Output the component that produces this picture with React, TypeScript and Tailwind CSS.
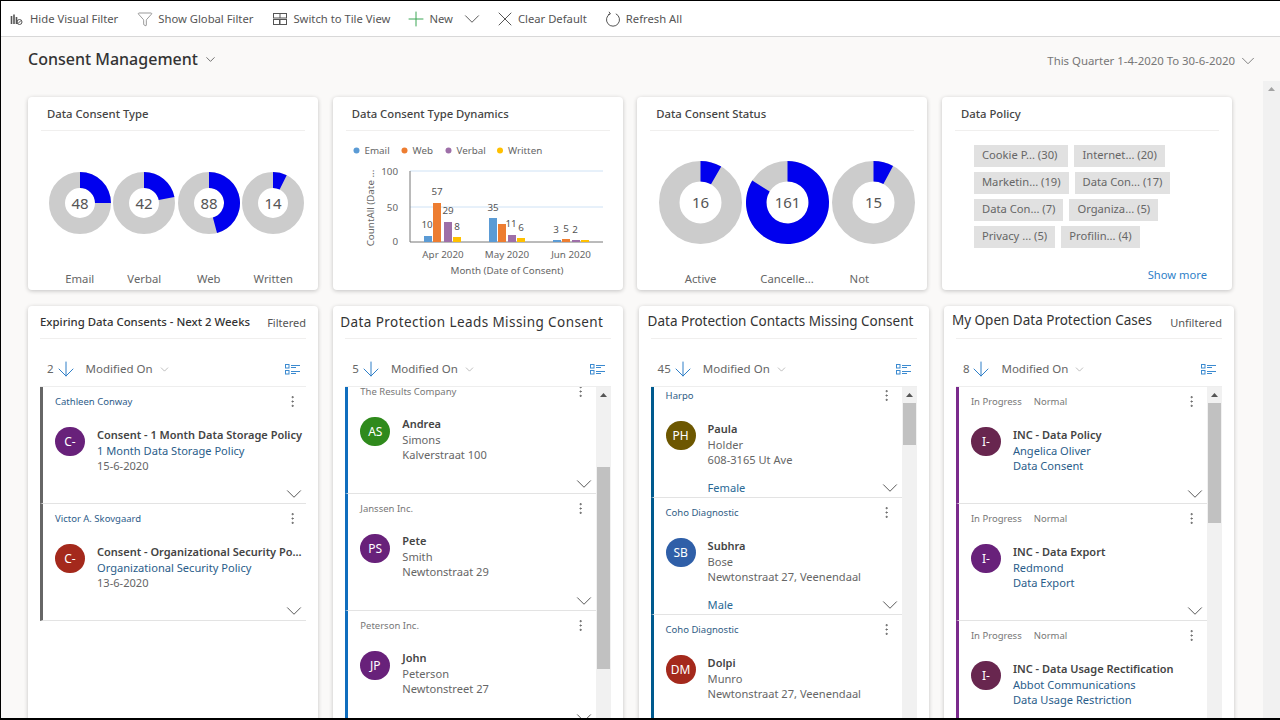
import { ArrowDown, ChevronDown, EllipsisVertical, Funnel, Plus, X } from "lucide-react";

type Row = {
  label: string[];
  initials: string;
  avatar: string;
  title: string;
  line2: string;
  line3: string;
  extra?: string;
};

function HideFilterIcon() {
  return (
    <svg width="13" height="13" viewBox="0 0 13 13" fill="none" stroke="#555" strokeWidth="1">
      <path d="M1.500 3v8M4 1.500v9.500M6.500 4v7" strokeWidth="1.600" />
      <circle cx="9.500" cy="9" r="2.500" />
      <path d="M8 10.500l3-3" />
    </svg>
  );
}

function TileIcon() {
  return (
    <svg width="14" height="12" viewBox="0 0 14 12" fill="none" stroke="#555" strokeWidth="1">
      <rect x="0.500" y="0.500" width="13" height="4.500" />
      <rect x="0.500" y="6.500" width="6" height="5" />
      <rect x="7" y="6.500" width="6.500" height="5" />
      <path d="M7 0.500v4.500" />
    </svg>
  );
}

function RefreshIcon() {
  return (
    <svg width="16" height="17" viewBox="0 0 16 17" fill="none" stroke="#555" strokeWidth="1">
      <path d="M5.200 2.800a6.500 6.500 0 1 0 5.600 0" />
      <path d="M4 0.800l1.400 2.100-2.300.8" />
    </svg>
  );
}

function ListViewIcon() {
  return (
    <svg width="15" height="11" viewBox="0 0 15 11" fill="none" stroke="#3b8ad0" strokeWidth="1">
      <rect x="0.500" y="0.500" width="3.500" height="3.500" />
      <rect x="0.500" y="6.500" width="3.500" height="3.500" />
      <path d="M6 1.500h9M6 3.500h5M6 7.500h9M6 9.500h5" />
    </svg>
  );
}

function Donut({ value, total, r, hole }: { value: number; total: number; r: number; hole: number }) {
  const a = (value / total) * Math.PI * 2;
  const big = a > Math.PI ? 1 : 0;
  const ox = r + r * Math.sin(a);
  const oy = r - r * Math.cos(a);
  const ix = r + hole * Math.sin(a);
  const iy = r - hole * Math.cos(a);
  const slice = `M${r} 0A${r} ${r} 0 ${big} 1 ${ox} ${oy}L${ix} ${iy}A${hole} ${hole} 0 ${big} 0 ${r} ${r - hole}Z`;
  return (
    <svg width={r * 2} height={r * 2} viewBox={`0 0 ${r * 2} ${r * 2}`}>
      <circle cx={r} cy={r} r={(r + hole) / 2} fill="none" stroke="#cccccc" strokeWidth={r - hole} />
      <path d={slice} fill="#0000ee" />
      <text x={r} y={r + 5.500} textAnchor="middle" fontSize="15" fill="#555">
        {value}
      </text>
    </svg>
  );
}

function TopCard({ title, children }: { title: string; children: React.ReactNode }) {
  return (
    <div className="h-[193px] bg-white rounded-sm shadow-[0_1px_4px_rgba(0,0,0,0.22)] flex flex-col">
      <div className="h-[34px] mx-[13px] pl-[6px] pt-[9px] border-b border-[#f0efee] text-[11.300px] leading-4 font-medium text-[#444] shrink-0">
        {title}
      </div>
      {children}
    </div>
  );
}

const barData = [
  { x: 424, top: 236, c: "#5b9bd5" },
  { x: 433, top: 203, c: "#ed7d31" },
  { x: 444, top: 222, c: "#9e6fa8" },
  { x: 453, top: 237, c: "#ffc000" },
  { x: 489, top: 218, c: "#5b9bd5" },
  { x: 498, top: 224, c: "#ed7d31" },
  { x: 508, top: 235, c: "#9e6fa8" },
  { x: 517, top: 238, c: "#ffc000" },
  { x: 553, top: 240, c: "#5b9bd5" },
  { x: 562, top: 239, c: "#ed7d31" },
  { x: 572, top: 240, c: "#9e6fa8" },
  { x: 581, top: 240, c: "#ffc000" },
];

const barLabels: [string, number, number][] = [
  ["10", 427, 228],
  ["57", 437, 195],
  ["29", 448, 214],
  ["8", 457, 230],
  ["35", 493, 211],
  ["11", 511, 227],
  ["6", 521, 231],
  ["3", 556, 233],
  ["5", 566, 232],
  ["2", 575, 233],
];

const legend: [string, string, number][] = [
  ["Email", "#5b9bd5", 356.500],
  ["Web", "#ed7d31", 404.500],
  ["Verbal", "#9e6fa8", 448.500],
  ["Written", "#ffc000", 500],
];

function BarChart() {
  return (
    <svg width="290" height="159" viewBox="333 131 290 159" fontSize="9.800" fill="#666">
      {legend.map(([name, color, x]) => (
        <g key={name}>
          <circle cx={x} cy="150.500" r="3" fill={color} />
          <text x={x + 8} y="154">
            {name}
          </text>
        </g>
      ))}
      <path d="M410 171H603M410 207H603" stroke="#cfe2f5" strokeWidth="1" />
      <path d="M410 171V242H603" stroke="#777" strokeWidth="1" fill="none" />
      {barData.map((b) => (
        <rect key={b.x} x={b.x} y={b.top} width="8" height={242 - b.top} fill={b.c} />
      ))}
      {barLabels.map(([t, x, y]) => (
        <text key={x} x={x} y={y} textAnchor="middle" fill="#555">
          {t}
        </text>
      ))}
      <text x="398" y="174.500" textAnchor="end">100</text>
      <text x="398" y="210.500" textAnchor="end">50</text>
      <text x="398" y="244.500" textAnchor="end">0</text>
      <text x="443" y="258" textAnchor="middle">Apr 2020</text>
      <text x="507" y="258" textAnchor="middle">May 2020</text>
      <text x="571" y="258" textAnchor="middle">Jun 2020</text>
      <text x="507" y="274" textAnchor="middle">Month (Date of Consent)</text>
      <text transform="translate(374 208) rotate(-90)" textAnchor="middle">CountAll (Date ...</text>
    </svg>
  );
}

const chips = [
  [
    { text: "Cookie P... (30)", cls: "w-[94.500px]" },
    { text: "Internet... (20)", cls: "" },
  ],
  [
    { text: "Marketin... (19)", cls: "" },
    { text: "Data Con... (17)", cls: "" },
  ],
  [
    { text: "Data Con... (7)", cls: "" },
    { text: "Organiza... (5)", cls: "" },
  ],
  [
    { text: "Privacy ... (5)", cls: "" },
    { text: "Profilin... (4)", cls: "" },
  ],
];

function ListCard({
  title,
  titleClass,
  badge,
  count,
  rows,
  barColor,
  labelColor,
  line2Color,
  line3Color,
  offset,
  thumb,
  kebabPad,
  textShift,
}: {
  title: string;
  titleClass: string;
  badge?: string;
  count: string;
  rows: Row[];
  barColor: string;
  labelColor: string;
  line2Color: string;
  line3Color: string;
  offset: string;
  thumb?: string;
  kebabPad: string;
  textShift?: string;
}) {
  return (
    <div className="h-[420px] bg-white rounded-sm shadow-[0_1px_4px_rgba(0,0,0,0.22)] flex flex-col">
      <div className="h-[33px] shrink-0 mx-3 border-b border-[#f0efee] flex items-center justify-between">
        <span className={`text-[#333] whitespace-nowrap ${titleClass}`}>{title}</span>
        {badge && <span className="text-[11px] text-[#555] mt-[2px]">{badge}</span>}
      </div>
      <div className="mx-3 h-[47px] pt-[13px] shrink-0 flex items-center pl-[7px] pr-[6px] text-[11.500px] text-[#666]">
        <span>{count}</span>
        <ArrowDown size={24} strokeWidth={1} className="text-[#2f7fc8]" />
        <span className="ml-[8px]">Modified On</span>
        <ChevronDown size={13} strokeWidth={1} className="ml-[5px] text-[#888]" />
        <span className="ml-auto">
          <ListViewIcon />
        </span>
      </div>
      <div className="mx-3 flex-1 flex min-h-0 overflow-hidden border-t border-[#eeeeee]">
        <div className="flex-1 min-w-0 overflow-hidden">
          <div className={offset}>
            {rows.map((row) => (
              <div
                key={row.title + row.line2}
                className={`h-[117px] border-l-[3px] border-b border-b-[#e3e3e3] flex flex-col ${barColor}`}
              >
                <div className={`h-[30px] shrink-0 flex items-center justify-between pl-3 ${kebabPad}`}>
                  <span className={`flex gap-3 text-[9.500px] ${labelColor}`}>
                    {row.label.map((l) => (
                      <span key={l}>{l}</span>
                    ))}
                  </span>
                  <EllipsisVertical size={15} strokeWidth={1.300} className="text-[#555] mb-[2px]" />
                </div>
                <div className="flex pl-3 pt-[10px]">
                  <div
                    className={`w-[30px] h-[29px] rounded-full shrink-0 flex items-center justify-center text-white text-[12px] ${row.avatar}`}
                  >
                    {row.initials}
                  </div>
                  <div className={`ml-3 min-w-0 text-[11.100px] leading-[15.500px] whitespace-nowrap ${textShift ?? ""}`}>
                    <div className="font-semibold text-[11px] text-[#444]">{row.title}</div>
                    <div className={line2Color}>{row.line2}</div>
                    <div className={line3Color}>{row.line3}</div>
                  </div>
                </div>
                <div className="mt-auto h-[18px] shrink-0 flex items-center justify-between pl-[54px] pr-[4px]">
                  <span className="text-[11.100px] text-[#2a6a96]">{row.extra}</span>
                  <ChevronDown size={26} strokeWidth={0.900} className="text-[#555] -mr-[5px]" />
                </div>
              </div>
            ))}
          </div>
        </div>
        {thumb && (
          <div className="w-[15px] shrink-0 bg-[#f1f1f1] flex flex-col items-center">
            <div className="h-[16px] flex items-center text-[#555]">
              <svg width="7" height="4" viewBox="0 0 7 4" fill="#555">
                <path d="M3.500 0L7 4H0z" />
              </svg>
            </div>
            <div className={`w-[13px] bg-[#c1c1c1] ${thumb}`} />
          </div>
        )}
      </div>
    </div>
  );
}

const expiring: Row[] = [
  {
    label: ["Cathleen Conway"],
    initials: "C-",
    avatar: "bg-[#68217a]",
    title: "Consent - 1 Month Data Storage Policy",
    line2: "1 Month Data Storage Policy",
    line3: "15-6-2020",
  },
  {
    label: ["Victor A. Skovgaard"],
    initials: "C-",
    avatar: "bg-[#a4291c]",
    title: "Consent - Organizational Security Po...",
    line2: "Organizational Security Policy",
    line3: "13-6-2020",
  },
];

const leads: Row[] = [
  { label: ["The Results Company"], initials: "AS", avatar: "bg-[#2f8a1c]", title: "Andrea", line2: "Simons", line3: "Kalverstraat 100" },
  { label: ["Janssen Inc."], initials: "PS", avatar: "bg-[#68217a]", title: "Pete", line2: "Smith", line3: "Newtonstraat 29" },
  { label: ["Peterson Inc."], initials: "JP", avatar: "bg-[#68217a]", title: "John", line2: "Peterson", line3: "Newtonstreet 27" },
];

const contacts: Row[] = [
  { label: ["Harpo"], initials: "PH", avatar: "bg-[#6d5700]", title: "Paula", line2: "Holder", line3: "608-3165 Ut Ave", extra: "Female" },
  { label: ["Coho Diagnostic"], initials: "SB", avatar: "bg-[#2f5fa8]", title: "Subhra", line2: "Bose", line3: "Newtonstraat 27, Veenendaal", extra: "Male" },
  { label: ["Coho Diagnostic"], initials: "DM", avatar: "bg-[#a4291c]", title: "Dolpi", line2: "Munro", line3: "Newtonstraat 27, Veenendaal" },
];

const cases: Row[] = [
  { label: ["In Progress", "Normal"], initials: "I-", avatar: "bg-[#68264f]", title: "INC - Data Policy", line2: "Angelica Oliver", line3: "Data Consent" },
  { label: ["In Progress", "Normal"], initials: "I-", avatar: "bg-[#68217a]", title: "INC - Data Export", line2: "Redmond", line3: "Data Export" },
  { label: ["In Progress", "Normal"], initials: "I-", avatar: "bg-[#68264f]", title: "INC - Data Usage Rectification", line2: "Abbot Communications", line3: "Data Usage Restriction" },
];

export default function App() {
  return (
    <div className="w-[1280px] h-[720px] overflow-hidden flex flex-col bg-[#faf9f8] border-t border-l border-b-2 border-black font-['Noto_Sans',sans-serif]">
      {/* Command bar */}
      <div className="h-9 shrink-0 pt-px bg-white border-b border-[#d8d8d8] flex items-center text-[11.250px] text-[#555]">
        <div className="ml-[9px] flex items-center gap-[7px]">
          <HideFilterIcon />
          <span>Hide Visual Filter</span>
        </div>
        <div className="ml-[19px] flex items-center gap-[5px]">
          <Funnel size={16} strokeWidth={0.900} />
          <span>Show Global Filter</span>
        </div>
        <div className="ml-[20px] flex items-center gap-[6px]">
          <TileIcon />
          <span>Switch to Tile View</span>
        </div>
        <div className="ml-[19px] flex items-center gap-[6px]">
          <Plus size={24} strokeWidth={1} className="-mx-[5px] text-[#3aa655]" />
          <span>New</span>
          <ChevronDown size={26} strokeWidth={0.900} className="ml-[0.500px] -mr-[6.500px]" />
        </div>
        <div className="ml-[20px] flex items-center gap-[7px]">
          <X size={24} strokeWidth={1} className="-mx-[6px]" />
          <span>Clear Default</span>
        </div>
        <div className="ml-[18px] flex items-center gap-[5px]">
          <RefreshIcon />
          <span>Refresh All</span>
        </div>
      </div>

      {/* Dashboard title */}
      <div className="h-[44px] shrink-0 flex items-center pl-[27px] pr-[26px]">
        <span className="text-[16px] font-medium text-[#333]">Consent Management</span>
        <ChevronDown size={15} strokeWidth={1.200} className="ml-[5px] text-[#444]" />
        <span className="ml-auto text-[11.400px] text-[#777] mt-[4px]">This Quarter 1-4-2020 To 30-6-2020</span>
        <ChevronDown size={22} strokeWidth={1} className="ml-[2px] -mr-[5px] text-[#777] mt-[3px]" />
      </div>

      <div className="flex-1 min-h-0 flex">
        <div className="flex-1 min-w-0 pl-[27px] pt-[16px]">
          <div className="grid grid-cols-[290px_290px_290px_290px] gap-x-[14.670px]">
            <TopCard title="Data Consent Type">
              <div className="flex-1 flex flex-col">
                <div className="flex pl-[19.500px] pt-[41px]">
                  {[48, 42, 88, 14].map((v) => (
                    <div key={v} className="w-[64.500px] flex justify-center">
                      <Donut value={v} total={192} r={31} hole={15} />
                    </div>
                  ))}
                </div>
                <div className="mt-auto pb-[3px] flex pl-[19.500px] text-[11.300px] leading-4 text-[#666]">
                  {["Email", "Verbal", "Web", "Written"].map((l) => (
                    <div key={l} className="w-[64.500px] text-center">
                      {l}
                    </div>
                  ))}
                </div>
              </div>
            </TopCard>

            <TopCard title="Data Consent Type Dynamics">
              <BarChart />
            </TopCard>

            <TopCard title="Data Consent Status">
              <div className="flex-1 flex flex-col">
                <div className="flex pl-[20px] pt-[30px]">
                  {[16, 161, 15].map((v) => (
                    <div key={v} className="w-[86.500px] flex justify-center">
                      <Donut value={v} total={192} r={41.500} hole={21} />
                    </div>
                  ))}
                </div>
                <div className="mt-auto pb-[3px] flex pl-[20px] text-[11.300px] leading-4 text-[#666]">
                  <div className="w-[86.500px] text-center">Active</div>
                  <div className="w-[86.500px] text-center">Cancelle...</div>
                  <div className="w-[58px] text-center">Not</div>
                </div>
              </div>
            </TopCard>

            <TopCard title="Data Policy">
              <div className="flex-1 flex flex-col pl-[32px] pt-[14px]">
                <div className="flex flex-col gap-[5.500px]">
                  {chips.map((row) => (
                    <div key={row[0].text} className="flex gap-[6px]">
                      {row.map((c) => (
                        <span
                          key={c.text}
                          className={`h-[21.500px] px-[8px] bg-[#e1e1e1] flex items-center text-[11.200px] text-[#666] whitespace-nowrap ${c.cls}`}
                        >
                          {c.text}
                        </span>
                      ))}
                    </div>
                  ))}
                </div>
                <div className="mt-auto mb-[6px] mr-[25px] text-right text-[11.200px] text-[#2f7fc8]">Show more</div>
              </div>
            </TopCard>
          </div>

          <div className="mt-4 grid grid-cols-[290px_290px_290px_290px] gap-x-[15.300px]">
            <ListCard
              title="Expiring Data Consents - Next 2 Weeks"
              titleClass="text-[11.400px] font-medium"
              badge="Filtered"
              count="2"
              rows={expiring}
              barColor="border-l-[#666666]"
              labelColor="text-[#2e5c8a]"
              line2Color="text-[#2a5d8a]"
              line3Color="text-[#666]"
              offset=""
              kebabPad="pr-[6px]"
            />
            <ListCard
              title="Data Protection Leads Missing Consent"
              titleClass="text-[13.500px] tracking-[0.420px] -ml-[5px] mt-[1px]"
              count="5"
              rows={leads}
              barColor="border-l-[#106ebe]"
              labelColor="text-[#777]"
              line2Color="text-[#666]"
              line3Color="text-[#666]"
              offset="-mt-[10px]"
              thumb="mt-[64px] h-[202px]"
              kebabPad="pr-[8px]"
              textShift="-mt-px"
            />
            <ListCard
              title="Data Protection Contacts Missing Consent"
              titleClass="text-[13.500px] -ml-[3px] -mt-[2px]"
              count="45"
              rows={contacts}
              barColor="border-l-[#005a8e]"
              labelColor="text-[#2f5d85]"
              line2Color="text-[#666]"
              line3Color="text-[#666]"
              offset="-mt-[6px]"
              thumb="h-[42px]"
              kebabPad="pr-[8px]"
            />
            <ListCard
              title="My Open Data Protection Cases"
              titleClass="text-[13.500px] -ml-[4px] -mt-[3px]"
              badge="Unfiltered"
              count="8"
              rows={cases}
              barColor="border-l-[#7a2a8c]"
              labelColor="text-[#777]"
              line2Color="text-[#2a5d8a]"
              line3Color="text-[#2a5d8a]"
              offset=""
              thumb="h-[120px]"
              kebabPad="pr-[8px]"
            />
          </div>
        </div>

        {/* Page scrollbar */}
        <div className="w-[17px] shrink-0 bg-[#f1f1f1] flex justify-center pt-[6px]">
          <svg width="7" height="4" viewBox="0 0 7 4" fill="#a3a3a3">
            <path d="M3.500 0L7 4H0z" />
          </svg>
        </div>
      </div>
    </div>
  );
}
